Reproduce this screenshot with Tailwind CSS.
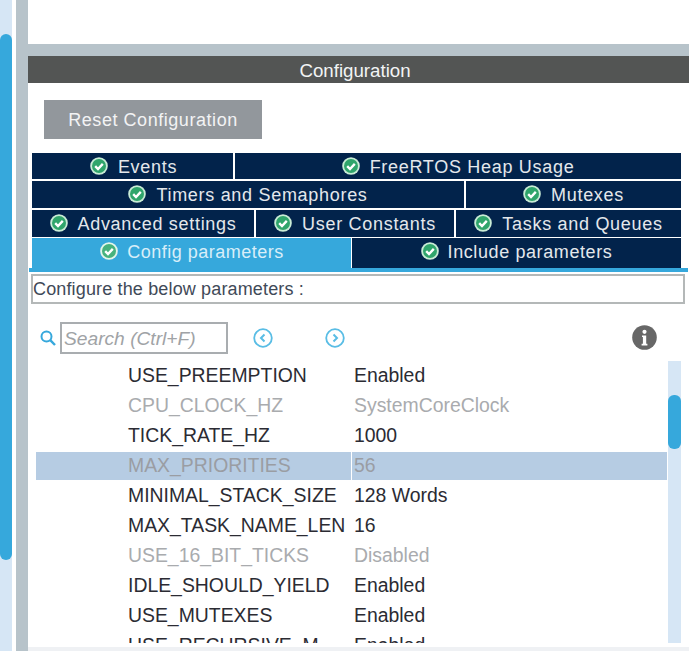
<!DOCTYPE html>
<html lang="en">
<head>
  <meta charset="UTF-8" />
  <title>Configuration</title>
  <script src="https://cdn.jsdelivr.net/npm/@tailwindcss/browser@4"></script>
</head>
<body class="bg-white">
  <div class="flex w-[689px] h-[651px] overflow-hidden font-['Liberation_Sans',sans-serif]">
    <!-- left scrollbar -->
    <div class="w-[12px] h-full bg-[#d6e6f5] pt-[34px] pb-[5px] shrink-0">
      <div class="h-[526px] bg-[#36a8dc] rounded-[6px]"></div>
    </div>
    <div class="w-[4px] shrink-0"></div>
    <div class="w-[12px] h-full bg-[#b7c3ca] shrink-0"></div>

    <!-- main -->
    <div class="flex-1 flex flex-col min-w-0">
      <div class="h-[44px] shrink-0"></div>
      <div class="h-[12px] bg-[#b7c3ca] shrink-0"></div>
      <div class="h-[27px] bg-[#535554] text-[#f2f4f4] text-[18.7px] pt-[3px] pr-[7px] flex items-center justify-center shrink-0">Configuration</div>

      <div class="flex-1 flex flex-col bg-white pl-[1px] pr-[1px] min-h-0">
        <div class="pt-[17px] pl-[15px]">
          <div class="w-[218px] h-[39px] bg-[#92979c] text-[#f2f3f4] text-[18px] tracking-[0.55px] pt-[2px] flex items-center justify-center">Reset Configuration</div>
        </div>

        <!-- tabs -->
        <div class="mt-[14px] pl-[3px] pr-[7px] flex flex-col gap-[2px] text-[18px] tracking-[0.7px] text-[#e4e8ec]">
          <div class="flex gap-[2px] h-[26px]">
            <div class="w-[201px] bg-[#02234b] flex items-center justify-center gap-[10px] pt-[2px] pl-[2px]"><svg class="w-[18px] h-[18px] -mt-[3px]" viewBox="0 0 18 18"><circle cx="9" cy="9" r="8.8" fill="#c9ecd6"/><circle cx="9" cy="9" r="7" fill="#2fa56b"/><path d="M5.2 9.2l2.8 2.8 4.8-5.1" fill="none" stroke="#fff" stroke-width="2.4"/></svg>Events</div>
            <div class="flex-1 bg-[#02234b] flex items-center justify-center gap-[10px] pt-[2px]"><svg class="w-[18px] h-[18px] -mt-[3px]" viewBox="0 0 18 18"><circle cx="9" cy="9" r="8.8" fill="#c9ecd6"/><circle cx="9" cy="9" r="7" fill="#2fa56b"/><path d="M5.2 9.2l2.8 2.8 4.8-5.1" fill="none" stroke="#fff" stroke-width="2.4"/></svg>FreeRTOS Heap Usage</div>
          </div>
          <div class="flex gap-[2px] h-[27px]">
            <div class="w-[432px] bg-[#02234b] flex items-center justify-center gap-[10px] pt-[1px]"><svg class="w-[18px] h-[18px] -mt-[2px]" viewBox="0 0 18 18"><circle cx="9" cy="9" r="8.8" fill="#c9ecd6"/><circle cx="9" cy="9" r="7" fill="#2fa56b"/><path d="M5.2 9.2l2.8 2.8 4.8-5.1" fill="none" stroke="#fff" stroke-width="2.4"/></svg>Timers and Semaphores</div>
            <div class="flex-1 bg-[#02234b] flex items-center justify-center gap-[10px] pt-[1px]"><svg class="w-[18px] h-[18px] -mt-[2px]" viewBox="0 0 18 18"><circle cx="9" cy="9" r="8.8" fill="#c9ecd6"/><circle cx="9" cy="9" r="7" fill="#2fa56b"/><path d="M5.2 9.2l2.8 2.8 4.8-5.1" fill="none" stroke="#fff" stroke-width="2.4"/></svg>Mutexes</div>
          </div>
          <div class="flex gap-[2px] h-[27px]">
            <div class="w-[222px] bg-[#02234b] flex items-center justify-center gap-[10px] pt-[1px]"><svg class="w-[18px] h-[18px] -mt-[2px]" viewBox="0 0 18 18"><circle cx="9" cy="9" r="8.8" fill="#c9ecd6"/><circle cx="9" cy="9" r="7" fill="#2fa56b"/><path d="M5.2 9.2l2.8 2.8 4.8-5.1" fill="none" stroke="#fff" stroke-width="2.4"/></svg>Advanced settings</div>
            <div class="w-[198px] bg-[#02234b] flex items-center justify-center gap-[10px] pt-[1px]"><svg class="w-[18px] h-[18px] -mt-[2px]" viewBox="0 0 18 18"><circle cx="9" cy="9" r="8.8" fill="#c9ecd6"/><circle cx="9" cy="9" r="7" fill="#2fa56b"/><path d="M5.2 9.2l2.8 2.8 4.8-5.1" fill="none" stroke="#fff" stroke-width="2.4"/></svg>User Constants</div>
            <div class="flex-1 bg-[#02234b] flex items-center justify-center gap-[10px] pt-[1px]"><svg class="w-[18px] h-[18px] -mt-[2px]" viewBox="0 0 18 18"><circle cx="9" cy="9" r="8.8" fill="#c9ecd6"/><circle cx="9" cy="9" r="7" fill="#2fa56b"/><path d="M5.2 9.2l2.8 2.8 4.8-5.1" fill="none" stroke="#fff" stroke-width="2.4"/></svg>Tasks and Queues</div>
          </div>
          <div class="flex gap-[1px] h-[30px] -mt-[1px]">
            <div class="w-[319px] bg-[#36a8dc] flex items-start pt-[1px] justify-center gap-[9px] pl-[1px] h-[30px]"><svg class="w-[18px] h-[18px] mt-[3px]" viewBox="0 0 18 18"><circle cx="9" cy="9" r="8.8" fill="#e3f6ea"/><circle cx="9" cy="9" r="7" fill="#46b27d"/><path d="M5.2 9.2l2.8 2.8 4.8-5.1" fill="none" stroke="#fff" stroke-width="2.4"/></svg><span class="text-[#d8eef9] leading-[26px] tracking-[0.5px]">Config parameters</span></div>
            <div class="flex-1 bg-[#02234b] flex items-start pt-[1px] justify-center gap-[9px]"><svg class="w-[18px] h-[18px] mt-[3px]" viewBox="0 0 18 18"><circle cx="9" cy="9" r="8.8" fill="#c9ecd6"/><circle cx="9" cy="9" r="7" fill="#2fa56b"/><path d="M5.2 9.2l2.8 2.8 4.8-5.1" fill="none" stroke="#fff" stroke-width="2.4"/></svg><span class="leading-[26px] tracking-[0.6px]">Include parameters</span></div>
          </div>
        </div>
        <div class="h-[4px] bg-[#36a8dc] shrink-0"></div>

        <!-- description -->
        <div class="mt-[2px] ml-[2px] mr-[3px] h-[30px] border-2 border-[#b4b8b8] flex items-center text-[18px] tracking-[0.15px] text-[#3f4a58] shrink-0">Configure the below parameters :</div>

        <!-- toolbar -->
        <div class="mt-[18px] h-[32px] flex items-center relative shrink-0">
          <svg class="ml-[11px] w-[16px] h-[16px]" viewBox="0 0 16 16"><circle cx="6.5" cy="6.5" r="5" fill="none" stroke="#36a8dc" stroke-width="2"/><path d="M10.2 10.2L15 15" stroke="#36a8dc" stroke-width="2.4"/></svg>
          <div class="ml-[4px] w-[168px] h-[32px] border-2 border-[#a9adb0] flex items-center pl-[2px] pt-[2px] text-[19.2px] italic text-[#a0a3a6]">Search (Ctrl+F)</div>
          <svg class="ml-[25px] w-[20px] h-[20px]" viewBox="0 0 20 20"><circle cx="10" cy="10" r="8.8" fill="none" stroke="#59bde5" stroke-width="1.8"/><path d="M11.5 6.5L8 10l3.5 3.5" fill="none" stroke="#59bde5" stroke-width="2"/></svg>
          <svg class="ml-[52px] w-[20px] h-[20px]" viewBox="0 0 20 20"><circle cx="10" cy="10" r="8.8" fill="none" stroke="#59bde5" stroke-width="1.8"/><path d="M8.5 6.5L12 10l-3.5 3.5" fill="none" stroke="#59bde5" stroke-width="2"/></svg>
          <svg class="ml-[287px] w-[25px] h-[25px] -mt-[2px]" viewBox="0 0 25 25"><circle cx="12.5" cy="12.5" r="12.3" fill="#676767"/><circle cx="12.5" cy="6.8" r="2.1" fill="#fff"/><path d="M10 10.4h4.2v8.4h1.2v1.7H9.6v-1.7h1.3v-6.7H10z" fill="#fff"/></svg>
        </div>

        <!-- parameter table -->
        <div class="flex-1 flex mt-[7px] mb-[4px] min-h-0">
          <div class="w-[631px] ml-[7px] overflow-hidden h-[282px] text-[19.4px] leading-[28px]">
            <div class="flex h-[30px] text-[#2b2b33]"><div class="w-[316px] pl-[92px] whitespace-nowrap">USE_PREEMPTION</div><div class="pl-[2px]">Enabled</div></div>
            <div class="flex h-[30px] text-[#a9abae]"><div class="w-[316px] pl-[92px] whitespace-nowrap">CPU_CLOCK_HZ</div><div class="pl-[2px]">SystemCoreClock</div></div>
            <div class="flex h-[30px] text-[#2b2b33]"><div class="w-[316px] pl-[92px] whitespace-nowrap">TICK_RATE_HZ</div><div class="pl-[2px]">1000</div></div>
            <div class="flex h-[28px] my-[1px] leading-[26px] text-[#9a9da3]"><div class="w-[315px] mr-[1px] bg-[#b6cce3] pl-[92px] whitespace-nowrap">MAX_PRIORITIES</div><div class="w-[315px] bg-[#b6cce3] pl-[2px]">56</div></div>
            <div class="flex h-[30px] text-[#2b2b33]"><div class="w-[316px] pl-[92px] whitespace-nowrap">MINIMAL_STACK_SIZE</div><div class="pl-[2px]">128 Words</div></div>
            <div class="flex h-[30px] text-[#2b2b33]"><div class="w-[316px] pl-[92px] whitespace-nowrap">MAX_TASK_NAME_LEN</div><div class="pl-[2px]">16</div></div>
            <div class="flex h-[30px] text-[#a9abae]"><div class="w-[316px] pl-[92px] whitespace-nowrap">USE_16_BIT_TICKS</div><div class="pl-[2px]">Disabled</div></div>
            <div class="flex h-[30px] text-[#2b2b33]"><div class="w-[316px] pl-[92px] whitespace-nowrap">IDLE_SHOULD_YIELD</div><div class="pl-[2px]">Enabled</div></div>
            <div class="flex h-[30px] text-[#2b2b33]"><div class="w-[316px] pl-[92px] whitespace-nowrap">USE_MUTEXES</div><div class="pl-[2px]">Enabled</div></div>
            <div class="flex h-[30px] text-[#2b2b33]"><div class="w-[316px] pl-[92px] whitespace-nowrap">USE_RECURSIVE_M</div><div class="pl-[2px]">Enabled</div></div>
          </div>
          <div class="w-[13px] h-[282px] ml-[1px] bg-[#d6e6f5] pt-[34px] shrink-0">
            <div class="h-[54px] bg-[#36a8dc] rounded-[6px]"></div>
          </div>
        </div>
        <div class="h-[4px] bg-[#eff1f4] shrink-0 -mx-[1px]"></div>
      </div>
    </div>
  </div>
</body>
</html>
